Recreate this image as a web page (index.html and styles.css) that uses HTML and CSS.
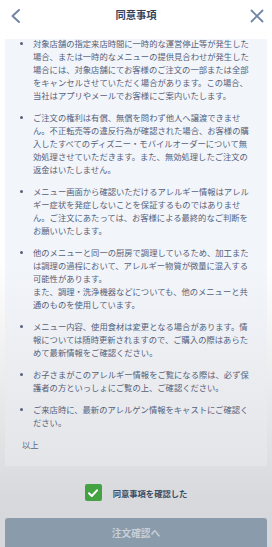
FILE: index.html
```html
<!DOCTYPE html>
<html lang="ja">
<head>
<meta charset="utf-8">
<link rel="stylesheet" href="styles.css">
</head>
<body>
<header class="header">
  <svg class="icon back" width="12" height="16" viewBox="0 0 12 16"><path d="M9 2 L2.5 8 L9 14" fill="none" stroke="currentColor" stroke-width="2" stroke-linecap="round" stroke-linejoin="round"/></svg>
  <h1 class="title">同意事項</h1>
  <svg class="icon close" width="14" height="14" viewBox="0 0 14 14"><path d="M1.5 1.5 L12.5 12.5 M12.5 1.5 L1.5 12.5" fill="none" stroke="currentColor" stroke-width="1.8" stroke-linecap="round"/></svg>
</header>
<main class="scroll">
  <div class="box">
    <ul class="list">
      <li>対象店舗の指定来店時間に一時的な運営停止等が発生した場合、または一時的なメニューの提供見合わせが発生した場合には、対象店舗にてお客様のご注文の一部または全部をキャンセルさせていただく場合があります。この場合、当社はアプリやメールでお客様にご案内いたします。</li>
      <li>ご注文の権利は有償、無償を問わず他人へ譲渡できません。不正転売等の違反行為が確認された場合、お客様の購入したすべてのディズニー・モバイルオーダーについて無効処理させていただきます。また、無効処理したご注文の返金はいたしません。</li>
      <li>メニュー画面から確認いただけるアレルギー情報はアレルギー症状を発症しないことを保証するものではありません。ご注文にあたっては、お客様による最終的なご判断をお願いいたします。</li>
      <li>他のメニューと同一の厨房で調理しているため、加工または調理の過程において、アレルギー物質が微量に混入する可能性があります。<br>また、調理・洗浄機器などについても、他のメニューと共通のものを使用しています。</li>
      <li>メニュー内容、使用食材は変更となる場合があります。情報については随時更新されますので、ご購入の際はあらためて最新情報をご確認ください。</li>
      <li>お子さまがこのアレルギー情報をご覧になる際は、必ず保護者の方といっしょにご覧の上、ご確認ください。</li>
      <li>ご来店時に、最新のアレルゲン情報をキャストにご確認ください。</li>
    </ul>
    <p class="end">以上</p>
  </div>
</main>
<footer class="footer">
  <label class="agree">
    <span class="check"><svg width="16" height="16" viewBox="0 0 16 16"><path d="M4 8.3 L6.8 11 L12 5.3" fill="none" stroke="#fff" stroke-width="2" stroke-linecap="round" stroke-linejoin="round"/></svg></span>
    <span class="agree-text">同意事項を確認した</span>
  </label>
  <button class="submit">注文確認へ</button>
</footer>
</body>
</html>
```
FILE: styles.css
```css
* { box-sizing: border-box; }
html, body {
  margin: 0;
  padding: 0;
  height: 547px;
  overflow: hidden;
}
body {
  background: linear-gradient(#ffffff 0, #ffffff 260px, #d8d9dc 500px, #d6d7da 547px);
  font-family: "Noto Sans CJK JP", "Noto Sans", sans-serif;
  display: flex;
  flex-direction: column;
}
.header {
  height: 39px;
  flex: none;
  display: flex;
  align-items: flex-start;
  justify-content: space-between;
  padding: 8px 8px 0 10px;
  color: #7186a3;
}
.icon.close { margin-top: 1px; }
.title {
  margin: 0;
  font-size: 10.3px;
  font-weight: 700;
  line-height: 14px;
  color: #34435b;
}
.scroll {
  flex: none;
  height: 429px;
  overflow: hidden;
  padding: 0 5px;
}
.box {
  background: linear-gradient(#f2f5fa 0, #f2f5fa 230px, #e4e5e8 100%);
  height: 100%;
  padding: 0 14px 0 0;
}
.list {
  margin: -2.5px 0 0 0;
  padding: 0 0 0 28px;
  list-style: disc;
  color: #55617a;
  font-size: 8.3px;
  line-height: 13px;
}
.list li { margin: 0 0 9px 0; }
.list li::marker { font-size: 8px; color: #55617a; }
.end {
  margin: 0;
  padding-left: 17px;
  font-size: 8.3px;
  line-height: 13px;
  color: #5d687c;
}
.footer {
  flex: none;
  display: flex;
  flex-direction: column;
  align-items: center;
  padding: 16px 5px 0;
  gap: 17px;
}
.agree {
  display: flex;
  align-items: center;
  gap: 11px;
  height: 17px;
}
.check {
  width: 17px;
  height: 17px;
  border-radius: 2px;
  background: #45a243;
  display: flex;
  align-items: center;
  justify-content: center;
}
.agree-text {
  font-size: 8.3px;
  font-weight: 700;
  color: #3a4a63;
}
.submit {
  width: 100%;
  height: 34px;
  border: none;
  border-radius: 3px;
  background: #8a9bab;
  color: #c7cfd8;
  font-family: "Noto Sans CJK JP", "Noto Sans", sans-serif;
  font-size: 9.7px;
  font-weight: 700;
  padding: 0 0 4px;
}
```
